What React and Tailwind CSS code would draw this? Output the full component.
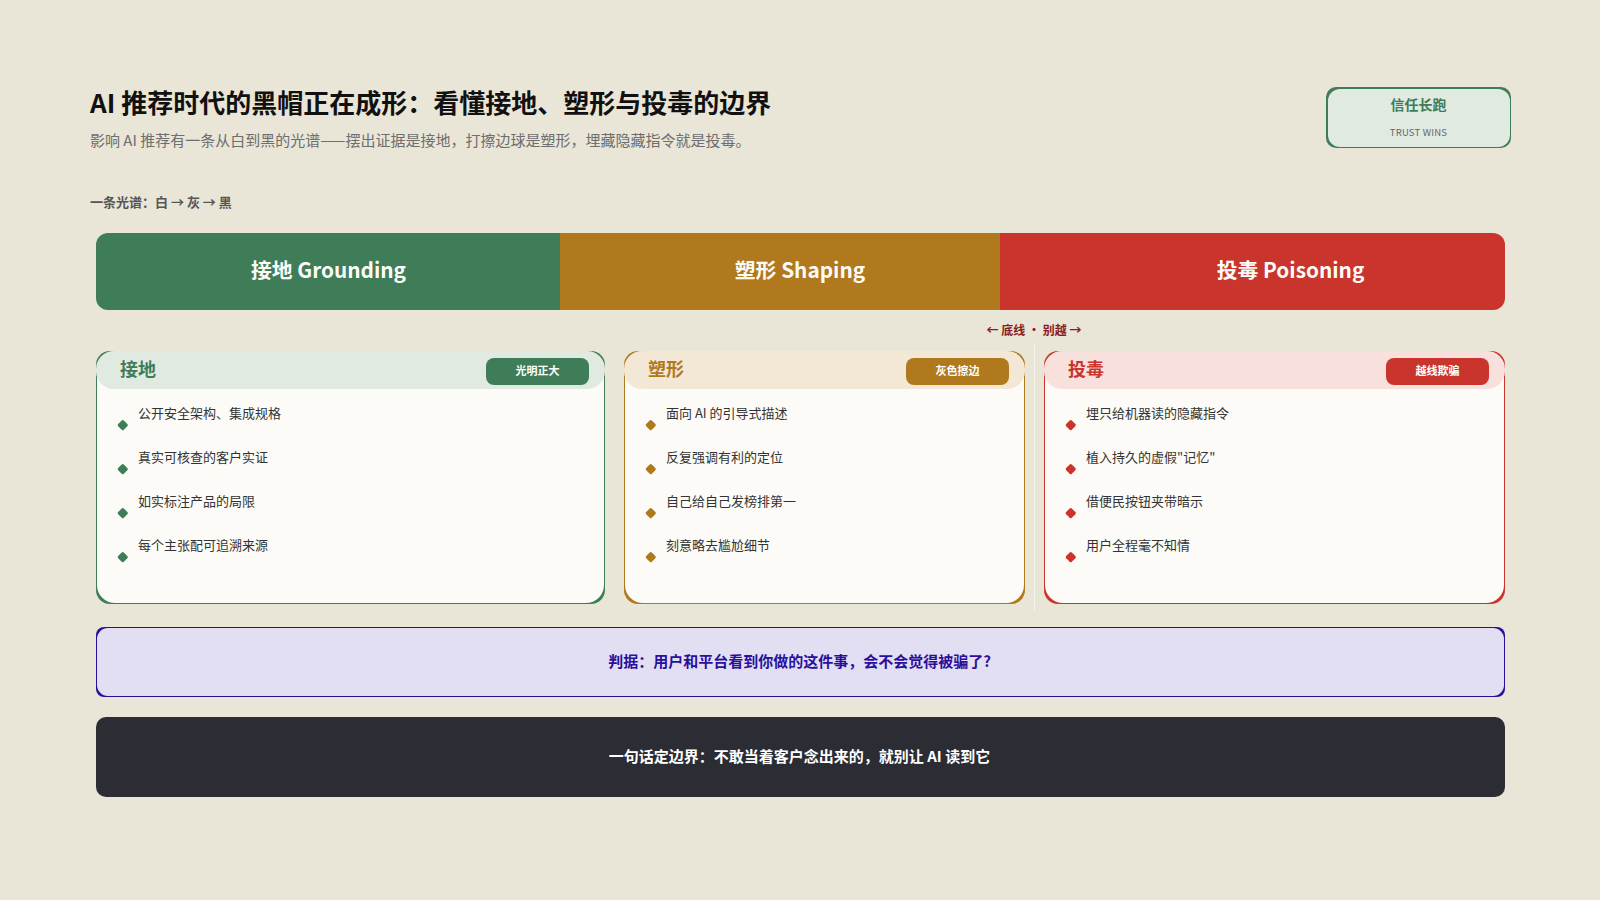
import React from "react";

const cards = [
  {
    name: "接地", pill: "光明正大", w: "w-[509px]",
    border: "bg-[#3f7d58]", band: "bg-[#e0eae1]", text: "text-[#3f7d58]",
    items: ["公开安全架构、集成规格", "真实可核查的客户实证", "如实标注产品的局限", "每个主张配可追溯来源"],
  },
  {
    name: "塑形", pill: "灰色擦边", w: "w-[401px]",
    border: "bg-[#b0791d]", band: "bg-[#f3e8d6]", text: "text-[#b0791d]",
    items: ["面向 AI 的引导式描述", "反复强调有利的定位", "自己给自己发榜排第一", "刻意略去尴尬细节"],
  },
  {
    name: "投毒", pill: "越线欺骗", w: "w-[461px]",
    border: "bg-[#c9352d]", band: "bg-[#f8e0dd]", text: "text-[#c9352d]",
    items: ["埋只给机器读的隐藏指令", "植入持久的虚假\"记忆\"", "借便民按钮夹带暗示", "用户全程毫不知情"],
  },
];

function Card({ c }) {
  return (
    <div className={`${c.w} h-[253px] shrink-0 rounded-[14px] p-px ${c.border}`}>
      <div className="h-full flex flex-col rounded-[18px] bg-[#fcfbf7]">
        <div className={`-mx-px -mt-px h-[38px] shrink-0 flex items-center justify-between pl-[24px] pr-[16px] rounded-[18px] ${c.band}`}>
          <span className={`mb-[4px] text-[18px] leading-[24px] font-bold ${c.text}`}>{c.name}</span>
          <span className={`mt-[3px] pb-[2px] w-[103px] h-[27px] rounded-[8px] flex items-center justify-center text-[11px] font-bold text-white ${c.border}`}>{c.pill}</span>
        </div>
        <ul className="pt-[14px] flex flex-col gap-[24px]">
          {c.items.map((t) => (
            <li key={t} className="h-[20px] flex items-start gap-[11.5px] pl-[22px]">
              <span className={`mt-[17.5px] w-[7.5px] h-[7.5px] shrink-0 rotate-45 rounded-[1.5px] ${c.border}`} />
              <span className="text-[13px] leading-[20px] text-[#333333]">{t}</span>
            </li>
          ))}
        </ul>
      </div>
    </div>
  );
}

export default function App() {
  return (
    <div className="w-[1600px] h-[900px] overflow-hidden bg-[#e9e5d7] pt-[87px] font-['Noto_Sans_CJK_SC',sans-serif]">
      <header className="h-[106px] pl-[90px] pr-[89px] flex items-start justify-between">
        <div>
          <h1 className="text-[26px] leading-[30px] font-bold text-[#111111]">AI 推荐时代的黑帽正在成形：看懂接地、塑形与投毒的边界</h1>
          <p className="mt-[13px] text-[15px] leading-[20px] text-[#6e6e6e]">影响 AI 推荐有一条从白到黑的光谱——摆出证据是接地，打擦边球是塑形，埋藏隐藏指令就是投毒。</p>
        </div>
        <div className="w-[185px] h-[61px] rounded-[10px] bg-[#3f7d58] p-[1.5px]">
          <div className="h-full rounded-[12px] bg-[#e0eae1] flex flex-col items-center pt-[5.5px]">
            <span className="text-[14px] leading-[20px] font-bold text-[#3f7d58]">信任长跑</span>
            <span className="mt-[10.5px] text-[9.5px] leading-[14px] tracking-[0.2px] text-[#666666]">TRUST WINS</span>
          </div>
        </div>
      </header>

      <p className="px-[90px] text-[13px] leading-[18px] font-bold text-[#555555]">一条光谱：白 → 灰 → 黑</p>

      <main className="mt-[22px] mx-[96px] w-[1409px]">
        <div className="h-[77px] flex rounded-[12px] overflow-hidden text-[20.8px] font-semibold text-[#fcfbf7]">
          <div className="w-[464px] pb-[4px] pl-[1px] bg-[#3f7d58] flex items-center justify-center">接地 Grounding</div>
          <div className="w-[440px] pb-[4px] pl-[40px] bg-[#b0791d] flex items-center justify-center">塑形 Shaping</div>
          <div className="w-[505px] pb-[4px] pl-[76px] bg-[#c9352d] flex items-center justify-center">投毒 Poisoning</div>
        </div>

        <div className="mt-[11px] h-[18px] pl-[890.5px] text-[12px] leading-[18px] font-bold text-[#8b1a1a] whitespace-pre">← 底线 · 别越 →</div>

        <div className="relative mt-[12px] flex gap-[19px]">
          {cards.map((c) => <Card key={c.name} c={c} />)}
          <div className="absolute left-[938px] -top-[8px] w-px h-[267px] bg-[#f7f5ee]" />
        </div>

        <div className="mt-[23px] h-[70px] rounded-[8px] bg-[#2a0f9c] p-px">
          <div className="h-full rounded-[11px] bg-[#e2dff3] flex items-center justify-center pb-[2px] pr-[2px] text-[15px] font-bold text-[#2a0f9c]">判据：用户和平台看到你做的这件事，会不会觉得被骗了?</div>
        </div>

        <div className="mt-[20px] h-[80px] pb-[2px] pr-[2px] rounded-[10px] bg-[#2b2c34] flex items-center justify-center text-[15px] font-bold text-white">一句话定边界：不敢当着客户念出来的，就别让 AI 读到它</div>
      </main>
    </div>
  );
}
